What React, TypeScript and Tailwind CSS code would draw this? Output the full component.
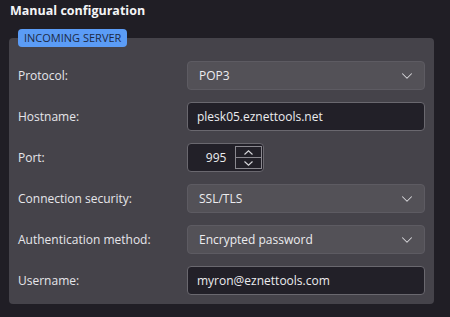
import { ChevronDown } from "lucide-react";

type Row = {
  label: string;
  kind: "select" | "input" | "port";
  value: string;
};

const rows: Row[] = [
  { label: "Protocol:", kind: "select", value: "POP3" },
  { label: "Hostname:", kind: "input", value: "plesk05.eznettools.net" },
  { label: "Port:", kind: "port", value: "995" },
  { label: "Connection security:", kind: "select", value: "SSL/TLS" },
  { label: "Authentication method:", kind: "select", value: "Encrypted password" },
  { label: "Username:", kind: "input", value: "myron@eznettools.com" },
];

function SpinArrow({ up }: { up?: boolean }) {
  return (
    <svg width="9" height="5" viewBox="0 0 9 5" className="text-[#d8d8dc]">
      <polyline
        points={up ? "0.5,4.5 4.5,0.8 8.5,4.5" : "0.5,0.5 4.5,4.2 8.5,0.5"}
        fill="none"
        stroke="currentColor"
        strokeWidth="1.1"
      />
    </svg>
  );
}

function Field({ row }: { row: Row }) {
  if (row.kind === "select") {
    return (
      <div className="flex h-[29px] items-center justify-between rounded-[4px] border border-[#5d5b62] bg-[#535157] pl-[11px] pr-[8px] text-[12px] text-[#ececef]">
        <span>{row.value}</span>
        <ChevronDown className="h-[18px] w-[18px] text-[#d8d8dc]" strokeWidth={1.4} />
      </div>
    );
  }
  if (row.kind === "port") {
    return (
      <div className="flex h-[29px] w-[77px] items-center rounded-[4px] border border-[#6a686f] bg-[#222028] pr-[1px] text-[12px] text-[#ececef]">
        <span className="w-[48px] pr-[9px] text-right">{row.value}</span>
        <div className="flex h-[23px] w-[27px] flex-col border border-[#8a888f]">
          <div className="flex flex-1 items-center justify-center border-b border-[#8a888f]">
            <SpinArrow up />
          </div>
          <div className="flex flex-1 items-center justify-center">
            <SpinArrow />
          </div>
        </div>
      </div>
    );
  }
  return (
    <div className="flex h-[29px] items-center rounded-[4px] border border-[#6a686f] bg-[#222028] px-[9px] text-[12px] text-[#ececef]">
      {row.value}
    </div>
  );
}

export default function App() {
  return (
    <div
      className="h-[317px] w-[450px] bg-[#201e25] pl-[9px] pr-[16px] pt-[1px]"
      style={{ fontFamily: '"Open Sans", "Noto Sans", sans-serif' }}
    >
      <div className="pl-[1px] text-[12.5px] font-bold leading-[20px] text-[#f4f4f6]">Manual configuration</div>

      <div className="mt-[8px]">
        <div className="relative z-10 -mb-[9px] ml-[9px] w-fit rounded-[4px] bg-[#5b9cf6] px-[6px] text-[11px] leading-[18px] text-[#1d2a45]">
          INCOMING SERVER
        </div>
        <div className="flex flex-col gap-[12px] rounded-[4px] bg-[#45434a] px-[9px] pb-[9px] pt-[23px]">
          {rows.map((r) => (
            <div key={r.label} className="grid grid-cols-[169px_1fr] items-center">
              <div className="text-[12px] text-[#e6e6ea]">{r.label}</div>
              <Field row={r} />
            </div>
          ))}
        </div>
      </div>
    </div>
  );
}
